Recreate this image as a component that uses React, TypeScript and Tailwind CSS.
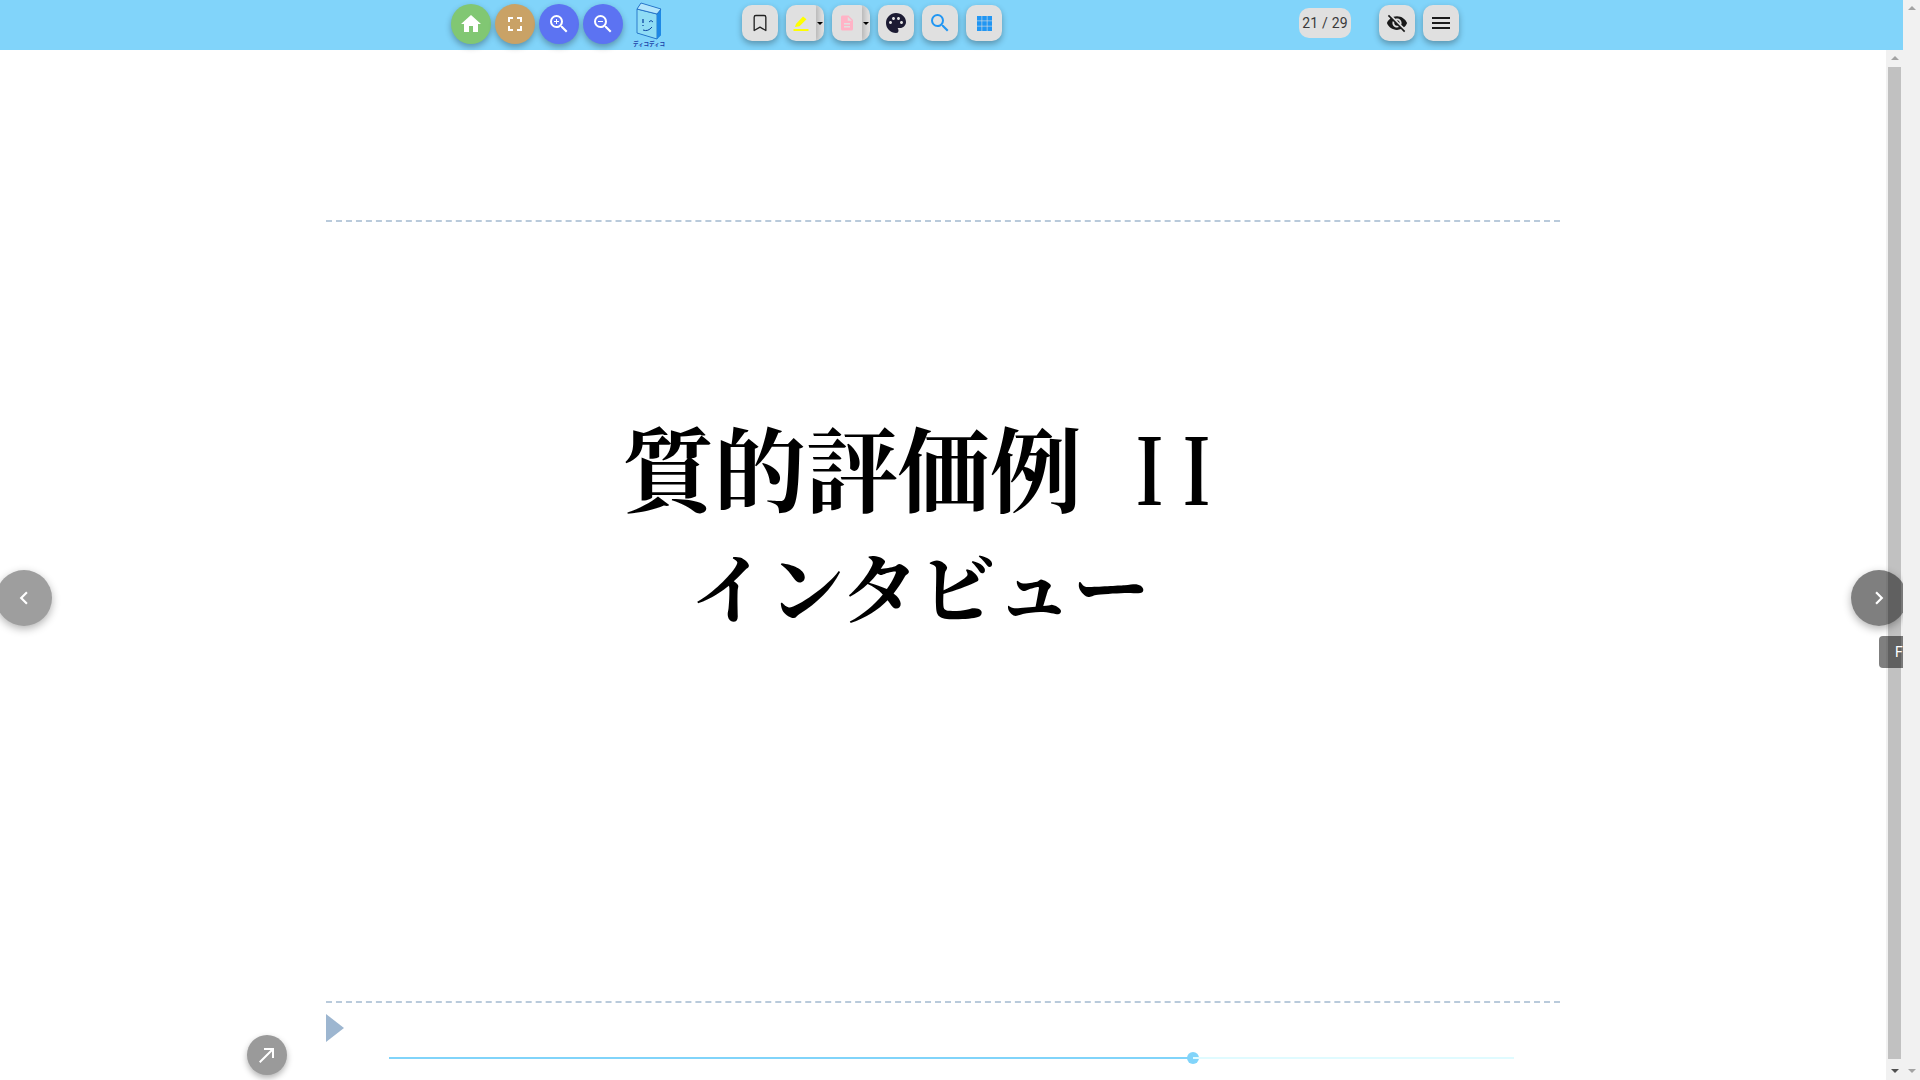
import React from "react";
import { MdHome, MdFullscreen, MdZoomIn, MdZoomOut, MdDescription, MdPalette, MdSearch, MdMenu, MdVisibilityOff, MdChevronLeft, MdChevronRight, MdCallMade } from "react-icons/md";
import { Bookmark } from "lucide-react";

const Round = ({ bg, children }: { bg: string; children: React.ReactNode }) => (
  <div className={`w-10 h-10 rounded-full flex items-center justify-center text-white shadow-[0_3px_6px_rgba(0,0,0,0.3)] ${bg}`}>{children}</div>
);

const Square = ({ children }: { children: React.ReactNode }) => (
  <div className="w-9 h-9 rounded-[10px] bg-[#e0e0e0] flex items-center justify-center shadow-[0_3px_6px_rgba(0,0,0,0.3)]">{children}</div>
);

const Split = ({ children }: { children: React.ReactNode }) => (
  <div className="w-[38px] h-9 rounded-[10px] bg-[#e0e0e0] flex shadow-[0_3px_6px_rgba(0,0,0,0.3)] overflow-hidden">
    <div className="w-[30px] flex items-center justify-center shadow-[3px_0_5px_rgba(0,0,0,0.18)]">{children}</div>
    <div className="flex-1 flex items-center justify-center">
      <div className="w-0 h-0 border-x-[3px] border-x-transparent border-t-[3px] border-t-black" />
    </div>
  </div>
);

const Arrow = ({ up, dark }: { up?: boolean; dark?: boolean }) => (
  <div className={`w-0 h-0 border-x-[4px] border-x-transparent ${up ? "border-b-[4px]" : "border-t-[4px]"} ${dark ? "border-t-[#505050]" : "border-t-[#a3a3a3]"} border-b-[#a3a3a3]`} />
);

export default function App() {
  return (
    <div className="w-[1920px] h-[1080px] flex overflow-hidden bg-white font-['Roboto',sans-serif] relative">
      <div className="w-[1903px] flex flex-col">
        <header className="h-[50px] shrink-0 bg-[#81d4fa] flex items-center pl-[451px] relative z-10">
          <div className="flex gap-1 items-center -mt-[2px]">
            <Round bg="bg-[#81c773]"><MdHome size={24} /></Round>
            <Round bg="bg-[#c9a266]"><MdFullscreen size={24} /></Round>
            <Round bg="bg-[#5c73f2]"><MdZoomIn size={24} /></Round>
            <Round bg="bg-[#5c73f2]"><MdZoomOut size={24} /></Round>
          </div>
          <div className="ml-[9px] w-[34px] h-[46px] flex flex-col items-center">
            <svg width="30" height="38" viewBox="0 0 30 38">
              <path d="M3 7 L7 1 L27 7 L27 33 L23 37 L3 31 Z" fill="#1976d2" />
              <path d="M3 7 L23 12 L23 37 L3 31 Z" fill="#8fdcf5" stroke="#1565c0" strokeWidth="0.8" />
              <path d="M23 12 L27 7 L27 33 L23 37 Z" fill="#1e88e5" />
              <path d="M7 1 L27 7 L23 12 L3 7 Z" fill="#b3e5fc" stroke="#1565c0" strokeWidth="0.8" />
              <path d="M9 17 L9 21 M9 23 L9 24" stroke="#0d47a1" strokeWidth="1.3" />
              <path d="M15 20 Q17 17 19 20 M9 28 Q14 30 18 25" stroke="#0d47a1" strokeWidth="1" fill="none" />
            </svg>
            <div className="text-[5.5px] leading-[8px] font-bold text-[#1a3fa8] whitespace-nowrap font-['Noto_Sans_CJK_JP',sans-serif]">ディコディコ</div>
          </div>
          <div className="flex gap-2 items-center ml-[76px] -mt-1">
            <Square><Bookmark size={20} strokeWidth={1.6} color="#222" /></Square>
            <Split>
              <svg width="16" height="15" viewBox="0 0 16 15"><path d="M0.500 13h15v2h-15z M2 11l1-3 7-7.500 3.500 2.800-7 7z" fill="#ffff00" /></svg>
            </Split>
            <Split><MdDescription size={18} color="#ffb3c6" /></Split>
            <Square><MdPalette size={24} color="#1c1b33" /></Square>
            <Square><MdSearch size={24} color="#2196f3" /></Square>
            <Square>
              <svg width="15" height="15" viewBox="0 0 15 15" fill="#2196f3">
                {[0, 5.2, 10.4].flatMap((x) => [0, 5.2, 10.4].map((y) => <rect key={`${x}-${y}`} x={x} y={y} width="4.600" height="4.600" />))}
              </svg>
            </Square>
          </div>
          <div className="ml-[297px] w-[52px] h-[30px] rounded-[10px] bg-[#e0e0e0] flex items-center justify-center text-[14px] text-[#3a3a3a] -mt-1 tracking-[0.2px]">21 / 29</div>
          <div className="flex gap-2 items-center ml-[28px] -mt-1">
            <Square><MdVisibilityOff size={22} color="#1a1a1a" /></Square>
            <Square><MdMenu size={24} color="#1a1a1a" /></Square>
          </div>
        </header>
        <div className="flex-1 flex min-h-0">
          <main className="flex-1 flex flex-col items-center">
            <div className="w-[1234px] flex flex-col">
              <div className="mt-[170px] border-t-2 border-dashed border-[#b9cadb]" />
              <div className="h-[779px] flex flex-col items-center pr-[46px] font-['Noto_Serif_CJK_JP','Liberation_Serif',serif] font-bold text-black">
                <div className="mt-[181px] ml-[2px] text-[92px] leading-[124px] whitespace-nowrap flex items-center">
                  <span>質的評価例</span>
                  <span className="ml-[44px] inline-block w-[47px] text-center scale-x-[0.72]">I</span>
                  <span className="inline-block w-[47px] text-center scale-x-[0.72]">I</span>
                </div>
                <div className="mt-[6px] text-[77px] leading-[104px] whitespace-nowrap">インタビュー</div>
              </div>
              <div className="border-t-2 border-dashed border-[#b9cadb]" />
              <div className="w-0 h-0 mt-[11px] border-y-[14px] border-y-transparent border-l-[18px] border-l-[#9db6d0]" />
              <div className="ml-[63px] mt-[10px] w-[1125px] flex items-center">
                <div className="h-[2px] w-[804px] bg-[#81d4fa]" />
                <div className="w-3 h-3 rounded-full bg-[#81d4fa] shrink-0 -mx-[6px]" />
                <div className="h-[2px] flex-1 bg-[#e0fbff]" />
              </div>
            </div>
          </main>
          <aside className="w-[17px] bg-[#f1f1f1] flex flex-col items-center pt-[6px]">
            <Arrow up />
            <div className="mt-[7px] w-[13px] h-[992px] bg-[#c1c1c1]" />
            <div className="mt-[10px]"><Arrow dark /></div>
          </aside>
        </div>
      </div>
      <aside className="w-[17px] bg-[#f1f1f1] flex flex-col items-center pt-[6px]">
        <Arrow up />
        <div className="flex-1" />
        <div className="mb-[7px]"><Arrow /></div>
      </aside>

      <div className="absolute left-[-4px] top-[570px] w-14 h-14 rounded-full bg-[#9e9e9e] text-white flex items-center justify-center shadow-[0_3px_8px_rgba(0,0,0,0.3)]"><MdChevronLeft size={26} /></div>
      <div className="absolute left-[1851px] top-[570px] w-14 h-14 rounded-full bg-black/50 text-white flex items-center justify-center shadow-[0_3px_8px_rgba(0,0,0,0.3)] [clip-path:inset(-20px_4px_-20px_-20px)]"><MdChevronRight size={26} /></div>
      <div className="absolute left-[1879px] top-[636px] w-6 h-8 rounded-l-[4px] bg-black/50 text-white text-[14px] pl-4 flex items-center overflow-hidden">F</div>
      <div className="absolute left-[247px] top-[1035px] w-10 h-10 rounded-full bg-[#9a9a9a] text-white flex items-center justify-center shadow-[0_3px_6px_rgba(0,0,0,0.3)]"><MdCallMade size={24} /></div>
    </div>
  );
}
